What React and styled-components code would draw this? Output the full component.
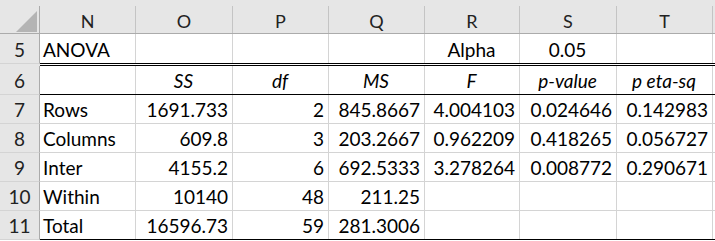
import styled, { createGlobalStyle } from "styled-components";

const GlobalStyle = createGlobalStyle`
  body {
    margin: 0;
    background: #fff;
  }
`;

const COLUMNS = ["N", "O", "P", "Q", "R", "S", "T"];
const CELL_TRACKS = "96px 97px 96px 96px 95px 97px 96px 1fr";

const ROWS = [
  {
    n: 5,
    rule: "double",
    height: 32,
    cells: [["ANOVA"], [""], [""], [""], ["Alpha", "center"], ["0.05", "center"], [""]],
  },
  {
    n: 6,
    rule: "single",
    italic: true,
    cells: [[""], ["SS", "center"], ["df", "center"], ["MS", "center"], ["F", "center"], ["p-value", "center"], ["p eta-sq", "center"]],
  },
  { n: 7, values: ["Rows", "1691.733", "2", "845.8667", "4.004103", "0.024646", "0.142983"] },
  { n: 8, values: ["Columns", "609.8", "3", "203.2667", "0.962209", "0.418265", "0.056727"] },
  { n: 9, values: ["Inter", "4155.2", "6", "692.5333", "3.278264", "0.008772", "0.290671"] },
  { n: 10, values: ["Within", "10140", "48", "211.25", "", "", ""] },
  { n: 11, rule: "single", values: ["Total", "16596.73", "59", "281.3006", "", "", ""] },
];

const toCells = (row) =>
  row.cells || row.values.map((v, i) => [v, i === 0 ? "left" : "right"]);

export default function App() {
  return (
    <>
      <GlobalStyle />
      <Sheet>
        <TopStrip />
        <HeadRow>
          <Corner>
            <svg width="21" height="21" viewBox="0 0 21 21">
              <polygon points="21,0 21,21 0,21" fill="#b4b4b4" />
            </svg>
          </Corner>
          {COLUMNS.map((c) => (
            <ColHead key={c}>{c}</ColHead>
          ))}
          <ColHead $last />
        </HeadRow>

        {ROWS.map((row) => (
          <Row key={row.n} $h={row.height || 29}>
            <RowNum $gap={row.rule === "double" ? 2 : 0}>{row.n}</RowNum>
            <Band $rule={row.rule}>
              {toCells(row).map(([text, align], i) => (
                <Cell key={i} $align={align} $italic={row.italic}>
                  {text}
                </Cell>
              ))}
              <Cell $last />
            </Band>
          </Row>
        ))}
      </Sheet>
    </>
  );
}

const Sheet = styled.div`
  width: 715px;
  height: 241px;
  overflow: hidden;
  background: #fff;
  color: #000;
  font-family: Lato, "Liberation Sans", sans-serif;
  font-size: 19px;
`;

const TopStrip = styled.div`
  height: 6px;
  background: #e6e6e6;
`;

const HeadRow = styled.div`
  display: grid;
  grid-template-columns: 40px ${CELL_TRACKS};
  height: 28px;
  box-sizing: border-box;
  background: #e6e6e6;
  border-bottom: 1px solid #ababab;
`;

const Corner = styled.div`
  display: flex;
  align-items: flex-end;
  justify-content: flex-end;
  padding: 0 2px 1px 0;
  border-right: 1px solid #ababab;
`;

const ColHead = styled.div`
  display: flex;
  align-items: flex-end;
  justify-content: center;
  padding-bottom: 3px;
  font-size: 18px;
  line-height: 1;
  color: #222;
  border-right: ${(p) => (p.$last ? "none" : "1px solid #c4c4c4")};
`;

const Row = styled.div`
  display: flex;
  height: ${(p) => p.$h}px;
`;

const RowNum = styled.div`
  flex: 0 0 40px;
  box-sizing: border-box;
  display: flex;
  align-items: flex-end;
  justify-content: center;
  padding-bottom: 4px;
  margin-bottom: ${(p) => p.$gap}px;
  line-height: 1;
  color: #222;
  background: #e6e6e6;
  border-right: 1px solid #ababab;
  border-bottom: 1px solid #d4d4d4;
  box-shadow: 0 ${(p) => p.$gap}px 0 #e6e6e6;
`;

const rules = {
  double: "3px double #000",
  single: "1px solid #000",
};

const Band = styled.div`
  flex: 1;
  display: grid;
  grid-template-columns: ${CELL_TRACKS};
  border-bottom: ${(p) => rules[p.$rule] || "1px solid #d4d4d4"};
`;

const justify = { left: "flex-start", center: "center", right: "flex-end" };

const Cell = styled.div`
  display: flex;
  align-items: flex-end;
  justify-content: ${(p) => justify[p.$align || "left"]};
  padding: 0 4px 4px 3px;
  min-width: 0;
  line-height: 1;
  white-space: nowrap;
  font-style: ${(p) => (p.$italic ? "italic" : "normal")};
  border-right: ${(p) => (p.$last ? "none" : "1px solid #d4d4d4")};
`;
